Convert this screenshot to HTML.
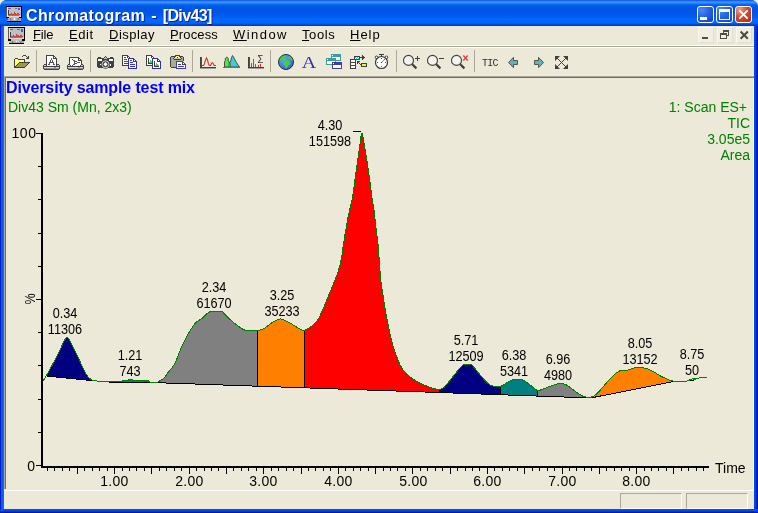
<!DOCTYPE html>
<html><head><meta charset="utf-8"><title>Chromatogram - [Div43]</title>
<style>
html,body{margin:0;padding:0;}
body{width:758px;height:513px;overflow:hidden;position:relative;background:#ECE9D8;font-family:"Liberation Sans",sans-serif;font-size:13px;color:#000;}
.abs{position:absolute;}
#win{will-change:transform;position:absolute;left:0;top:0;width:758px;height:513px;background:#0054E3;border-radius:7px 7px 0 0;overflow:hidden;}
#title{position:absolute;left:0;top:0;width:758px;height:26px;background:linear-gradient(to bottom,#0044D6 0px,#2A7DF0 1px,#3C96FF 2.2px,#2A86FF 3.2px,#0A6CF8 4.2px,#0260EC 5.2px,#0058E6 6.5px,#0054E3 10px,#0056EB 14px,#005DF5 17px,#0268FE 19.5px,#0066FA 22.5px,#005AEA 23.8px,#0042CE 24.8px,#0036BC 26px);}
#ttext{position:absolute;left:26px;top:7px;font-weight:bold;font-size:16px;color:#fff;white-space:nowrap;text-shadow:1px 1px 0 rgba(10,24,131,0.85);letter-spacing:0.12px;}
#client{position:absolute;left:4px;top:26px;width:750px;height:483px;background:#ECE9D8;}
#menuline{position:absolute;left:4px;top:45px;width:750px;height:3px;background:#fff;}
.mi{position:absolute;top:26px;height:18px;line-height:17px;font-size:13px;white-space:nowrap;letter-spacing:0.6px;}
.mi u{text-decoration:underline;}
#mdi-l{position:absolute;left:4px;top:76px;width:1px;height:413px;background:#ACA899;}
#mdi-t{position:absolute;left:4px;top:76px;width:750px;height:1px;background:#ACA899;}
#mdi-t2{position:absolute;left:5px;top:77px;width:749px;height:1px;background:#716F64;}
#mdi-l2{position:absolute;left:5px;top:77px;width:1px;height:412px;background:#716F64;}
#sb-top{position:absolute;left:4px;top:490px;width:750px;height:1px;background:#fff;}
.sbp{position:absolute;top:493px;height:16px;border-top:1px solid #ACA899;border-left:1px solid #ACA899;border-right:1px solid #fff;border-bottom:1px solid #fff;box-sizing:border-box;}
.tb{position:absolute;top:6px;width:15px;height:15px;border:1px solid #fff;border-radius:3px;background:radial-gradient(circle at 25% 20%,#4a8af5 0%,#2563e8 45%,#0a3fcf 100%);}
.tbc{background:radial-gradient(circle at 25% 20%,#f0a088 0%,#d8492a 45%,#b8280f 100%);}
.mb{position:absolute;top:27px;width:16px;height:16px;background:#F1EFE4;box-shadow:inset 1px 1px 0 #F8F7F0, inset -1px -1px 0 #E2DFD0;}
.sep{position:absolute;top:50px;width:1px;height:22px;background:#ACA899;}
#h1{position:absolute;left:6px;top:79px;font-weight:bold;font-size:16px;color:#0000FF;white-space:nowrap;letter-spacing:-0.13px;line-height:18px;}
#h2{position:absolute;left:8px;top:99px;font-size:14px;color:#008000;white-space:nowrap;line-height:16px;}
#tr{position:absolute;right:8px;top:99px;font-size:14px;color:#008000;white-space:nowrap;text-align:right;line-height:16px;}
.pk{position:absolute;width:80px;text-align:center;font-size:14px;line-height:16px;white-space:nowrap;transform:scaleX(0.905);transform-origin:50% 50%;}
.xl{position:absolute;top:474px;width:60px;text-align:center;font-size:14px;line-height:14px;letter-spacing:0.3px;text-indent:0.8px;}
.yl{position:absolute;font-size:14px;line-height:14px;text-align:right;width:30px;}
</style></head><body>
<div id="win">
<div id="title"></div>
<div id="ttext"><span style="letter-spacing:0.36px">Chromatogram</span><span style="word-spacing:1.6px"> - </span><span style="letter-spacing:-0.65px">[Div43]</span></div>
<div id="client"></div>
<div class="abs" style="left:0;top:26px;width:4px;height:487px;background:linear-gradient(to right,#0019CF 0,#0019CF 1px,#0A5FE8 1px,#0A5FE8 3px,#1563F0 3px)"></div>
<div class="abs" style="left:754px;top:26px;width:4px;height:487px;background:linear-gradient(to right,#0046E4 0,#0046E4 2px,#0028C0 2px,#0028C0 3px,#001590 3px)"></div>
<div class="abs" style="left:0;top:509px;width:758px;height:4px;background:linear-gradient(to bottom,#0050E8 0,#0050E8 2px,#0032C4 2px,#0032C4 3px,#00179A 3px)"></div>
<div class="abs" style="left:753px;top:76px;width:1px;height:414px;background:#fff"></div>
<div id="menuline"></div><div class="abs" style="left:4px;top:46px;width:750px;height:1px;background:#ACA899"></div>
<div class="mi" style="left:33px;letter-spacing:-0.15px"><u>F</u>ile</div>
<div class="mi" style="left:69px"><u>E</u>dit</div>
<div class="mi" style="left:109px;letter-spacing:0.48px"><u>D</u>isplay</div>
<div class="mi" style="left:170px;letter-spacing:0.15px"><u>P</u>rocess</div>
<div class="mi" style="left:233px;letter-spacing:1.44px"><u>W</u>indow</div>
<div class="mi" style="left:302px"><u>T</u>ools</div>
<div class="mi" style="left:350px;letter-spacing:1px"><u>H</u>elp</div>
<div class="sep" style="left:36px"></div>
<div class="sep" style="left:90px"></div>
<div class="sep" style="left:192px"></div>
<div class="sep" style="left:270px"></div>
<div class="sep" style="left:396px"></div>
<div class="sep" style="left:474px"></div>
<svg id="icons" width="758" height="513" viewBox="0 0 758 513" style="position:absolute;left:0;top:0" shape-rendering="crispEdges">
<g transform="translate(6,6) scale(1,1.04)"><rect x="0" y="0" width="16" height="1" fill="#000"/><rect x="0" y="1" width="1" height="1" fill="#585858"/><rect x="1" y="1" width="1" height="1" fill="#E8E8E8"/><rect x="2" y="1" width="13" height="1" fill="#C0C0C0"/><rect x="15" y="1" width="1" height="1" fill="#000"/><rect x="0" y="2" width="1" height="1" fill="#585858"/><rect x="1" y="2" width="1" height="1" fill="#E8E8E8"/><rect x="2" y="2" width="3" height="1" fill="#6060D0"/><rect x="5" y="2" width="4" height="1" fill="#C0C0C0"/><rect x="9" y="2" width="2" height="1" fill="#6060D0"/><rect x="11" y="2" width="1" height="1" fill="#C0C0C0"/><rect x="12" y="2" width="2" height="1" fill="#5050F0"/><rect x="14" y="2" width="1" height="1" fill="#C0C0C0"/><rect x="15" y="2" width="1" height="1" fill="#000"/><rect x="0" y="3" width="1" height="1" fill="#585858"/><rect x="1" y="3" width="1" height="1" fill="#E8E8E8"/><rect x="2" y="3" width="10" height="1" fill="#C0C0C0"/><rect x="12" y="3" width="2" height="1" fill="#5050F0"/><rect x="14" y="3" width="1" height="1" fill="#C0C0C0"/><rect x="15" y="3" width="1" height="1" fill="#000"/><rect x="0" y="4" width="1" height="1" fill="#585858"/><rect x="1" y="4" width="1" height="1" fill="#E8E8E8"/><rect x="2" y="4" width="1" height="1" fill="#404040"/><rect x="3" y="4" width="12" height="1" fill="#C0C0C0"/><rect x="15" y="4" width="1" height="1" fill="#000"/><rect x="0" y="5" width="1" height="1" fill="#585858"/><rect x="1" y="5" width="1" height="1" fill="#E8E8E8"/><rect x="2" y="5" width="1" height="1" fill="#404040"/><rect x="3" y="5" width="5" height="1" fill="#C0C0C0"/><rect x="8" y="5" width="1" height="1" fill="#CDA8A8"/><rect x="9" y="5" width="6" height="1" fill="#C0C0C0"/><rect x="15" y="5" width="1" height="1" fill="#000"/><rect x="0" y="6" width="1" height="1" fill="#585858"/><rect x="1" y="6" width="1" height="1" fill="#E8E8E8"/><rect x="2" y="6" width="1" height="1" fill="#404040"/><rect x="3" y="6" width="2" height="1" fill="#C0C0C0"/><rect x="5" y="6" width="1" height="1" fill="#CDA8A8"/><rect x="6" y="6" width="2" height="1" fill="#C0C0C0"/><rect x="8" y="6" width="1" height="1" fill="#C04848"/><rect x="9" y="6" width="1" height="1" fill="#C0C0C0"/><rect x="10" y="6" width="1" height="1" fill="#CDA8A8"/><rect x="11" y="6" width="1" height="1" fill="#C0C0C0"/><rect x="12" y="6" width="1" height="1" fill="#CDA8A8"/><rect x="13" y="6" width="2" height="1" fill="#C0C0C0"/><rect x="15" y="6" width="1" height="1" fill="#000"/><rect x="0" y="7" width="1" height="1" fill="#585858"/><rect x="1" y="7" width="1" height="1" fill="#E8E8E8"/><rect x="2" y="7" width="1" height="1" fill="#404040"/><rect x="3" y="7" width="1" height="1" fill="#C0C0C0"/><rect x="4" y="7" width="1" height="1" fill="#CDA8A8"/><rect x="5" y="7" width="1" height="1" fill="#C04848"/><rect x="6" y="7" width="1" height="1" fill="#C0C0C0"/><rect x="7" y="7" width="1" height="1" fill="#CDA8A8"/><rect x="8" y="7" width="2" height="1" fill="#C04848"/><rect x="10" y="7" width="1" height="1" fill="#C0C0C0"/><rect x="11" y="7" width="2" height="1" fill="#C04848"/><rect x="13" y="7" width="1" height="1" fill="#C0C0C0"/><rect x="14" y="7" width="1" height="1" fill="#CDA8A8"/><rect x="15" y="7" width="1" height="1" fill="#000"/><rect x="0" y="8" width="1" height="1" fill="#585858"/><rect x="1" y="8" width="1" height="1" fill="#E8E8E8"/><rect x="2" y="8" width="1" height="1" fill="#404040"/><rect x="3" y="8" width="11" height="1" fill="#C04848"/><rect x="14" y="8" width="1" height="1" fill="#C0C0C0"/><rect x="15" y="8" width="1" height="1" fill="#000"/><rect x="0" y="9" width="1" height="1" fill="#585858"/><rect x="1" y="9" width="1" height="1" fill="#E8E8E8"/><rect x="2" y="9" width="11" height="1" fill="#808080"/><rect x="13" y="9" width="2" height="1" fill="#C0C0C0"/><rect x="15" y="9" width="1" height="1" fill="#000"/><rect x="0" y="10" width="1" height="1" fill="#585858"/><rect x="1" y="10" width="14" height="1" fill="#D8D8D8"/><rect x="15" y="10" width="1" height="1" fill="#000"/><rect x="0" y="11" width="3" height="1" fill="#000"/><rect x="3" y="11" width="10" height="1" fill="#C0C0C0"/><rect x="13" y="11" width="3" height="1" fill="#000"/><rect x="2" y="12" width="2" height="1" fill="#A8A8A8"/><rect x="4" y="12" width="1" height="1" fill="#808080"/><rect x="5" y="12" width="2" height="1" fill="#A8A8A8"/><rect x="7" y="12" width="1" height="1" fill="#C0C0C0"/><rect x="8" y="12" width="1" height="1" fill="#fff"/><rect x="9" y="12" width="1" height="1" fill="#C0C0C0"/><rect x="10" y="12" width="2" height="1" fill="#A8A8A8"/><rect x="12" y="12" width="1" height="1" fill="#808080"/><rect x="13" y="12" width="2" height="1" fill="#A8A8A8"/><rect x="1" y="13" width="3" height="1" fill="#A8A8A8"/><rect x="4" y="13" width="1" height="1" fill="#808080"/><rect x="5" y="13" width="6" height="1" fill="#A8A8A8"/><rect x="11" y="13" width="1" height="1" fill="#808080"/><rect x="12" y="13" width="3" height="1" fill="#A8A8A8"/><rect x="1" y="14" width="14" height="1" fill="#000"/></g>
<g transform="translate(8,27) scale(1.05,1.13)"><rect x="0" y="0" width="16" height="1" fill="#000"/><rect x="0" y="1" width="1" height="1" fill="#585858"/><rect x="1" y="1" width="1" height="1" fill="#E8E8E8"/><rect x="2" y="1" width="13" height="1" fill="#C0C0C0"/><rect x="15" y="1" width="1" height="1" fill="#000"/><rect x="0" y="2" width="1" height="1" fill="#585858"/><rect x="1" y="2" width="1" height="1" fill="#E8E8E8"/><rect x="2" y="2" width="3" height="1" fill="#6060D0"/><rect x="5" y="2" width="4" height="1" fill="#C0C0C0"/><rect x="9" y="2" width="2" height="1" fill="#6060D0"/><rect x="11" y="2" width="1" height="1" fill="#C0C0C0"/><rect x="12" y="2" width="2" height="1" fill="#5050F0"/><rect x="14" y="2" width="1" height="1" fill="#C0C0C0"/><rect x="15" y="2" width="1" height="1" fill="#000"/><rect x="0" y="3" width="1" height="1" fill="#585858"/><rect x="1" y="3" width="1" height="1" fill="#E8E8E8"/><rect x="2" y="3" width="10" height="1" fill="#C0C0C0"/><rect x="12" y="3" width="2" height="1" fill="#5050F0"/><rect x="14" y="3" width="1" height="1" fill="#C0C0C0"/><rect x="15" y="3" width="1" height="1" fill="#000"/><rect x="0" y="4" width="1" height="1" fill="#585858"/><rect x="1" y="4" width="1" height="1" fill="#E8E8E8"/><rect x="2" y="4" width="1" height="1" fill="#404040"/><rect x="3" y="4" width="12" height="1" fill="#C0C0C0"/><rect x="15" y="4" width="1" height="1" fill="#000"/><rect x="0" y="5" width="1" height="1" fill="#585858"/><rect x="1" y="5" width="1" height="1" fill="#E8E8E8"/><rect x="2" y="5" width="1" height="1" fill="#404040"/><rect x="3" y="5" width="5" height="1" fill="#C0C0C0"/><rect x="8" y="5" width="1" height="1" fill="#CDA8A8"/><rect x="9" y="5" width="6" height="1" fill="#C0C0C0"/><rect x="15" y="5" width="1" height="1" fill="#000"/><rect x="0" y="6" width="1" height="1" fill="#585858"/><rect x="1" y="6" width="1" height="1" fill="#E8E8E8"/><rect x="2" y="6" width="1" height="1" fill="#404040"/><rect x="3" y="6" width="2" height="1" fill="#C0C0C0"/><rect x="5" y="6" width="1" height="1" fill="#CDA8A8"/><rect x="6" y="6" width="2" height="1" fill="#C0C0C0"/><rect x="8" y="6" width="1" height="1" fill="#C04848"/><rect x="9" y="6" width="1" height="1" fill="#C0C0C0"/><rect x="10" y="6" width="1" height="1" fill="#CDA8A8"/><rect x="11" y="6" width="1" height="1" fill="#C0C0C0"/><rect x="12" y="6" width="1" height="1" fill="#CDA8A8"/><rect x="13" y="6" width="2" height="1" fill="#C0C0C0"/><rect x="15" y="6" width="1" height="1" fill="#000"/><rect x="0" y="7" width="1" height="1" fill="#585858"/><rect x="1" y="7" width="1" height="1" fill="#E8E8E8"/><rect x="2" y="7" width="1" height="1" fill="#404040"/><rect x="3" y="7" width="1" height="1" fill="#C0C0C0"/><rect x="4" y="7" width="1" height="1" fill="#CDA8A8"/><rect x="5" y="7" width="1" height="1" fill="#C04848"/><rect x="6" y="7" width="1" height="1" fill="#C0C0C0"/><rect x="7" y="7" width="1" height="1" fill="#CDA8A8"/><rect x="8" y="7" width="2" height="1" fill="#C04848"/><rect x="10" y="7" width="1" height="1" fill="#C0C0C0"/><rect x="11" y="7" width="2" height="1" fill="#C04848"/><rect x="13" y="7" width="1" height="1" fill="#C0C0C0"/><rect x="14" y="7" width="1" height="1" fill="#CDA8A8"/><rect x="15" y="7" width="1" height="1" fill="#000"/><rect x="0" y="8" width="1" height="1" fill="#585858"/><rect x="1" y="8" width="1" height="1" fill="#E8E8E8"/><rect x="2" y="8" width="1" height="1" fill="#404040"/><rect x="3" y="8" width="11" height="1" fill="#C04848"/><rect x="14" y="8" width="1" height="1" fill="#C0C0C0"/><rect x="15" y="8" width="1" height="1" fill="#000"/><rect x="0" y="9" width="1" height="1" fill="#585858"/><rect x="1" y="9" width="1" height="1" fill="#E8E8E8"/><rect x="2" y="9" width="11" height="1" fill="#808080"/><rect x="13" y="9" width="2" height="1" fill="#C0C0C0"/><rect x="15" y="9" width="1" height="1" fill="#000"/><rect x="0" y="10" width="1" height="1" fill="#585858"/><rect x="1" y="10" width="14" height="1" fill="#D8D8D8"/><rect x="15" y="10" width="1" height="1" fill="#000"/><rect x="0" y="11" width="3" height="1" fill="#000"/><rect x="3" y="11" width="10" height="1" fill="#C0C0C0"/><rect x="13" y="11" width="3" height="1" fill="#000"/><rect x="2" y="12" width="2" height="1" fill="#A8A8A8"/><rect x="4" y="12" width="1" height="1" fill="#808080"/><rect x="5" y="12" width="2" height="1" fill="#A8A8A8"/><rect x="7" y="12" width="1" height="1" fill="#C0C0C0"/><rect x="8" y="12" width="1" height="1" fill="#fff"/><rect x="9" y="12" width="1" height="1" fill="#C0C0C0"/><rect x="10" y="12" width="2" height="1" fill="#A8A8A8"/><rect x="12" y="12" width="1" height="1" fill="#808080"/><rect x="13" y="12" width="2" height="1" fill="#A8A8A8"/><rect x="1" y="13" width="3" height="1" fill="#A8A8A8"/><rect x="4" y="13" width="1" height="1" fill="#808080"/><rect x="5" y="13" width="6" height="1" fill="#A8A8A8"/><rect x="11" y="13" width="1" height="1" fill="#808080"/><rect x="12" y="13" width="3" height="1" fill="#A8A8A8"/><rect x="1" y="14" width="14" height="1" fill="#000"/></g>
<rect x="23" y="55" width="3" height="1" fill="#404040"/><rect x="22" y="56" width="1" height="1" fill="#404040"/><rect x="26" y="56" width="1" height="1" fill="#404040"/><rect x="28" y="56" width="1" height="1" fill="#404040"/><rect x="27" y="57" width="2" height="1" fill="#404040"/><rect x="15" y="58" width="3" height="1" fill="#404040"/><rect x="26" y="58" width="3" height="1" fill="#404040"/><rect x="14" y="59" width="1" height="1" fill="#404040"/><rect x="15" y="59" width="1" height="1" fill="#FFFF66"/><rect x="16" y="59" width="1" height="1" fill="#fff"/><rect x="17" y="59" width="1" height="1" fill="#FFFF66"/><rect x="18" y="59" width="7" height="1" fill="#404040"/><rect x="14" y="60" width="1" height="1" fill="#404040"/><rect x="15" y="60" width="1" height="1" fill="#fff"/><rect x="16" y="60" width="1" height="1" fill="#FFFF66"/><rect x="17" y="60" width="1" height="1" fill="#fff"/><rect x="18" y="60" width="1" height="1" fill="#FFFF66"/><rect x="19" y="60" width="1" height="1" fill="#fff"/><rect x="20" y="60" width="1" height="1" fill="#FFFF66"/><rect x="21" y="60" width="1" height="1" fill="#fff"/><rect x="22" y="60" width="1" height="1" fill="#FFFF66"/><rect x="23" y="60" width="1" height="1" fill="#fff"/><rect x="24" y="60" width="1" height="1" fill="#404040"/><rect x="14" y="61" width="1" height="1" fill="#404040"/><rect x="15" y="61" width="1" height="1" fill="#FFFF66"/><rect x="16" y="61" width="1" height="1" fill="#fff"/><rect x="17" y="61" width="1" height="1" fill="#FFFF66"/><rect x="18" y="61" width="1" height="1" fill="#fff"/><rect x="19" y="61" width="1" height="1" fill="#FFFF66"/><rect x="20" y="61" width="1" height="1" fill="#fff"/><rect x="21" y="61" width="1" height="1" fill="#FFFF66"/><rect x="22" y="61" width="1" height="1" fill="#fff"/><rect x="23" y="61" width="1" height="1" fill="#FFFF66"/><rect x="24" y="61" width="1" height="1" fill="#404040"/><rect x="14" y="62" width="1" height="1" fill="#404040"/><rect x="15" y="62" width="1" height="1" fill="#fff"/><rect x="16" y="62" width="1" height="1" fill="#FFFF66"/><rect x="17" y="62" width="1" height="1" fill="#fff"/><rect x="18" y="62" width="1" height="1" fill="#FFFF66"/><rect x="19" y="62" width="11" height="1" fill="#404040"/><rect x="14" y="63" width="1" height="1" fill="#404040"/><rect x="15" y="63" width="1" height="1" fill="#FFFF66"/><rect x="16" y="63" width="1" height="1" fill="#fff"/><rect x="17" y="63" width="1" height="1" fill="#FFFF66"/><rect x="18" y="63" width="1" height="1" fill="#404040"/><rect x="19" y="63" width="9" height="1" fill="#999955"/><rect x="28" y="63" width="1" height="1" fill="#404040"/><rect x="14" y="64" width="1" height="1" fill="#404040"/><rect x="15" y="64" width="1" height="1" fill="#fff"/><rect x="16" y="64" width="1" height="1" fill="#FFFF66"/><rect x="17" y="64" width="1" height="1" fill="#404040"/><rect x="18" y="64" width="9" height="1" fill="#999955"/><rect x="27" y="64" width="1" height="1" fill="#404040"/><rect x="14" y="65" width="1" height="1" fill="#404040"/><rect x="15" y="65" width="1" height="1" fill="#FFFF66"/><rect x="16" y="65" width="1" height="1" fill="#404040"/><rect x="17" y="65" width="9" height="1" fill="#999955"/><rect x="26" y="65" width="1" height="1" fill="#404040"/><rect x="14" y="66" width="2" height="1" fill="#404040"/><rect x="16" y="66" width="9" height="1" fill="#999955"/><rect x="25" y="66" width="1" height="1" fill="#404040"/><rect x="14" y="67" width="11" height="1" fill="#404040"/>
<rect x="46" y="55" width="8" height="1" fill="#404040"/><rect x="46" y="56" width="1" height="1" fill="#404040"/><rect x="47" y="56" width="6" height="1" fill="#fff"/><rect x="53" y="56" width="2" height="1" fill="#404040"/><rect x="46" y="57" width="1" height="1" fill="#404040"/><rect x="47" y="57" width="6" height="1" fill="#fff"/><rect x="53" y="57" width="1" height="1" fill="#404040"/><rect x="54" y="57" width="1" height="1" fill="#fff"/><rect x="55" y="57" width="1" height="1" fill="#404040"/><rect x="46" y="58" width="1" height="1" fill="#404040"/><rect x="47" y="58" width="4" height="1" fill="#fff"/><rect x="51" y="58" width="1" height="1" fill="#585858"/><rect x="52" y="58" width="1" height="1" fill="#fff"/><rect x="53" y="58" width="4" height="1" fill="#404040"/><rect x="46" y="59" width="1" height="1" fill="#404040"/><rect x="47" y="59" width="4" height="1" fill="#fff"/><rect x="51" y="59" width="1" height="1" fill="#585858"/><rect x="52" y="59" width="4" height="1" fill="#fff"/><rect x="56" y="59" width="1" height="1" fill="#404040"/><rect x="46" y="60" width="1" height="1" fill="#404040"/><rect x="47" y="60" width="3" height="1" fill="#fff"/><rect x="50" y="60" width="1" height="1" fill="#585858"/><rect x="51" y="60" width="1" height="1" fill="#fff"/><rect x="52" y="60" width="1" height="1" fill="#585858"/><rect x="53" y="60" width="3" height="1" fill="#fff"/><rect x="56" y="60" width="1" height="1" fill="#404040"/><rect x="46" y="61" width="1" height="1" fill="#404040"/><rect x="47" y="61" width="3" height="1" fill="#fff"/><rect x="50" y="61" width="1" height="1" fill="#585858"/><rect x="51" y="61" width="1" height="1" fill="#fff"/><rect x="52" y="61" width="1" height="1" fill="#585858"/><rect x="53" y="61" width="3" height="1" fill="#fff"/><rect x="56" y="61" width="1" height="1" fill="#404040"/><rect x="46" y="62" width="1" height="1" fill="#404040"/><rect x="47" y="62" width="2" height="1" fill="#fff"/><rect x="49" y="62" width="5" height="1" fill="#585858"/><rect x="54" y="62" width="2" height="1" fill="#fff"/><rect x="56" y="62" width="1" height="1" fill="#404040"/><rect x="46" y="63" width="1" height="1" fill="#404040"/><rect x="47" y="63" width="2" height="1" fill="#fff"/><rect x="49" y="63" width="1" height="1" fill="#585858"/><rect x="50" y="63" width="3" height="1" fill="#fff"/><rect x="53" y="63" width="1" height="1" fill="#585858"/><rect x="54" y="63" width="2" height="1" fill="#fff"/><rect x="56" y="63" width="1" height="1" fill="#404040"/><rect x="44" y="64" width="3" height="1" fill="#404040"/><rect x="47" y="64" width="1" height="1" fill="#fff"/><rect x="48" y="64" width="2" height="1" fill="#585858"/><rect x="50" y="64" width="3" height="1" fill="#fff"/><rect x="53" y="64" width="2" height="1" fill="#585858"/><rect x="55" y="64" width="1" height="1" fill="#fff"/><rect x="56" y="64" width="3" height="1" fill="#404040"/><rect x="43" y="65" width="1" height="1" fill="#404040"/><rect x="44" y="65" width="2" height="1" fill="#D8D8D8"/><rect x="46" y="65" width="1" height="1" fill="#404040"/><rect x="47" y="65" width="9" height="1" fill="#fff"/><rect x="56" y="65" width="1" height="1" fill="#404040"/><rect x="57" y="65" width="2" height="1" fill="#D8D8D8"/><rect x="59" y="65" width="1" height="1" fill="#404040"/><rect x="43" y="66" width="17" height="1" fill="#404040"/><rect x="43" y="67" width="1" height="1" fill="#404040"/><rect x="44" y="67" width="10" height="1" fill="#D8D8D8"/><rect x="54" y="67" width="2" height="1" fill="#33DD33"/><rect x="56" y="67" width="3" height="1" fill="#D8D8D8"/><rect x="59" y="67" width="1" height="1" fill="#404040"/><rect x="43" y="68" width="1" height="1" fill="#404040"/><rect x="44" y="68" width="15" height="1" fill="#8C8C8C"/><rect x="59" y="68" width="1" height="1" fill="#404040"/><rect x="44" y="69" width="15" height="1" fill="#404040"/>
<rect x="69" y="57" width="10" height="1" fill="#404040"/><rect x="69" y="58" width="1" height="1" fill="#404040"/><rect x="70" y="58" width="8" height="1" fill="#fff"/><rect x="78" y="58" width="2" height="1" fill="#404040"/><rect x="69" y="59" width="1" height="1" fill="#404040"/><rect x="70" y="59" width="2" height="1" fill="#fff"/><rect x="72" y="59" width="1" height="1" fill="#585858"/><rect x="73" y="59" width="5" height="1" fill="#fff"/><rect x="78" y="59" width="1" height="1" fill="#404040"/><rect x="79" y="59" width="1" height="1" fill="#fff"/><rect x="80" y="59" width="1" height="1" fill="#404040"/><rect x="69" y="60" width="1" height="1" fill="#404040"/><rect x="70" y="60" width="3" height="1" fill="#fff"/><rect x="73" y="60" width="2" height="1" fill="#585858"/><rect x="75" y="60" width="3" height="1" fill="#fff"/><rect x="78" y="60" width="4" height="1" fill="#404040"/><rect x="69" y="61" width="1" height="1" fill="#404040"/><rect x="70" y="61" width="4" height="1" fill="#fff"/><rect x="74" y="61" width="3" height="1" fill="#585858"/><rect x="77" y="61" width="4" height="1" fill="#fff"/><rect x="81" y="61" width="1" height="1" fill="#404040"/><rect x="69" y="62" width="1" height="1" fill="#404040"/><rect x="70" y="62" width="4" height="1" fill="#fff"/><rect x="74" y="62" width="1" height="1" fill="#585858"/><rect x="75" y="62" width="2" height="1" fill="#fff"/><rect x="77" y="62" width="3" height="1" fill="#585858"/><rect x="80" y="62" width="1" height="1" fill="#fff"/><rect x="81" y="62" width="1" height="1" fill="#404040"/><rect x="69" y="63" width="1" height="1" fill="#404040"/><rect x="70" y="63" width="4" height="1" fill="#fff"/><rect x="74" y="63" width="3" height="1" fill="#585858"/><rect x="77" y="63" width="4" height="1" fill="#fff"/><rect x="81" y="63" width="1" height="1" fill="#404040"/><rect x="68" y="64" width="2" height="1" fill="#404040"/><rect x="70" y="64" width="3" height="1" fill="#fff"/><rect x="73" y="64" width="2" height="1" fill="#585858"/><rect x="75" y="64" width="6" height="1" fill="#fff"/><rect x="81" y="64" width="2" height="1" fill="#404040"/><rect x="67" y="65" width="1" height="1" fill="#404040"/><rect x="68" y="65" width="2" height="1" fill="#D8D8D8"/><rect x="70" y="65" width="1" height="1" fill="#404040"/><rect x="71" y="65" width="1" height="1" fill="#fff"/><rect x="72" y="65" width="1" height="1" fill="#585858"/><rect x="73" y="65" width="7" height="1" fill="#fff"/><rect x="80" y="65" width="1" height="1" fill="#404040"/><rect x="81" y="65" width="2" height="1" fill="#D8D8D8"/><rect x="83" y="65" width="1" height="1" fill="#404040"/><rect x="67" y="66" width="17" height="1" fill="#404040"/><rect x="67" y="67" width="1" height="1" fill="#404040"/><rect x="68" y="67" width="10" height="1" fill="#D8D8D8"/><rect x="78" y="67" width="2" height="1" fill="#33DD33"/><rect x="80" y="67" width="3" height="1" fill="#D8D8D8"/><rect x="83" y="67" width="1" height="1" fill="#404040"/><rect x="67" y="68" width="1" height="1" fill="#404040"/><rect x="68" y="68" width="15" height="1" fill="#8C8C8C"/><rect x="83" y="68" width="1" height="1" fill="#404040"/><rect x="68" y="69" width="15" height="1" fill="#404040"/>
<rect x="105" y="56" width="1" height="1" fill="#404040"/><rect x="98" y="57" width="3" height="1" fill="#404040"/><rect x="104" y="57" width="1" height="1" fill="#404040"/><rect x="105" y="57" width="1" height="1" fill="#C0C0C0"/><rect x="106" y="57" width="1" height="1" fill="#404040"/><rect x="110" y="57" width="3" height="1" fill="#404040"/><rect x="97" y="58" width="7" height="1" fill="#404040"/><rect x="104" y="58" width="3" height="1" fill="#C0C0C0"/><rect x="107" y="58" width="7" height="1" fill="#404040"/><rect x="97" y="59" width="1" height="1" fill="#404040"/><rect x="98" y="59" width="4" height="1" fill="#fff"/><rect x="102" y="59" width="7" height="1" fill="#404040"/><rect x="109" y="59" width="4" height="1" fill="#fff"/><rect x="113" y="59" width="1" height="1" fill="#404040"/><rect x="97" y="60" width="1" height="1" fill="#404040"/><rect x="98" y="60" width="4" height="1" fill="#fff"/><rect x="102" y="60" width="7" height="1" fill="#404040"/><rect x="109" y="60" width="4" height="1" fill="#fff"/><rect x="113" y="60" width="1" height="1" fill="#404040"/><rect x="97" y="61" width="17" height="1" fill="#404040"/><rect x="97" y="62" width="17" height="1" fill="#404040"/><rect x="97" y="63" width="17" height="1" fill="#404040"/><rect x="97" y="64" width="3" height="1" fill="#404040"/><rect x="100" y="64" width="1" height="1" fill="#fff"/><rect x="101" y="64" width="9" height="1" fill="#404040"/><rect x="110" y="64" width="1" height="1" fill="#fff"/><rect x="111" y="64" width="3" height="1" fill="#404040"/><rect x="97" y="65" width="13" height="1" fill="#404040"/><rect x="110" y="65" width="1" height="1" fill="#fff"/><rect x="111" y="65" width="3" height="1" fill="#404040"/><rect x="97" y="66" width="17" height="1" fill="#404040"/><rect x="98" y="67" width="15" height="1" fill="#404040"/>
<g shape-rendering="auto"><circle cx="105.5" cy="64.3" r="4.4" fill="#404040"/><circle cx="105.5" cy="64.3" r="3.5" fill="none" stroke="#D0D0D0" stroke-width="1"/><path d="M105.5 62 L107.6 64.3 L105.5 66.6 L103.4 64.3Z" fill="#fff"/></g>
<rect x="122" y="55" width="6" height="1" fill="#404040"/><rect x="122" y="56" width="1" height="1" fill="#404040"/><rect x="123" y="56" width="4" height="1" fill="#fff"/><rect x="127" y="56" width="2" height="1" fill="#404040"/><rect x="122" y="57" width="1" height="1" fill="#404040"/><rect x="123" y="57" width="1" height="1" fill="#fff"/><rect x="124" y="57" width="2" height="1" fill="#3333FF"/><rect x="126" y="57" width="1" height="1" fill="#fff"/><rect x="127" y="57" width="1" height="1" fill="#404040"/><rect x="128" y="57" width="1" height="1" fill="#fff"/><rect x="129" y="57" width="1" height="1" fill="#404040"/><rect x="122" y="58" width="1" height="1" fill="#404040"/><rect x="123" y="58" width="5" height="1" fill="#fff"/><rect x="128" y="58" width="6" height="1" fill="#3333A0"/><rect x="122" y="59" width="1" height="1" fill="#404040"/><rect x="123" y="59" width="1" height="1" fill="#fff"/><rect x="124" y="59" width="3" height="1" fill="#3333FF"/><rect x="127" y="59" width="1" height="1" fill="#fff"/><rect x="128" y="59" width="1" height="1" fill="#3333A0"/><rect x="129" y="59" width="4" height="1" fill="#fff"/><rect x="133" y="59" width="2" height="1" fill="#3333A0"/><rect x="122" y="60" width="1" height="1" fill="#404040"/><rect x="123" y="60" width="5" height="1" fill="#fff"/><rect x="128" y="60" width="1" height="1" fill="#3333A0"/><rect x="129" y="60" width="1" height="1" fill="#fff"/><rect x="130" y="60" width="2" height="1" fill="#3333FF"/><rect x="132" y="60" width="1" height="1" fill="#fff"/><rect x="133" y="60" width="1" height="1" fill="#3333A0"/><rect x="134" y="60" width="1" height="1" fill="#fff"/><rect x="135" y="60" width="1" height="1" fill="#3333A0"/><rect x="122" y="61" width="1" height="1" fill="#404040"/><rect x="123" y="61" width="1" height="1" fill="#fff"/><rect x="124" y="61" width="4" height="1" fill="#3333FF"/><rect x="128" y="61" width="1" height="1" fill="#3333A0"/><rect x="129" y="61" width="4" height="1" fill="#fff"/><rect x="133" y="61" width="4" height="1" fill="#3333A0"/><rect x="122" y="62" width="1" height="1" fill="#404040"/><rect x="123" y="62" width="5" height="1" fill="#fff"/><rect x="128" y="62" width="1" height="1" fill="#3333A0"/><rect x="129" y="62" width="1" height="1" fill="#fff"/><rect x="130" y="62" width="3" height="1" fill="#3333FF"/><rect x="133" y="62" width="3" height="1" fill="#fff"/><rect x="136" y="62" width="1" height="1" fill="#3333A0"/><rect x="122" y="63" width="1" height="1" fill="#404040"/><rect x="123" y="63" width="1" height="1" fill="#fff"/><rect x="124" y="63" width="4" height="1" fill="#3333FF"/><rect x="128" y="63" width="1" height="1" fill="#3333A0"/><rect x="129" y="63" width="7" height="1" fill="#fff"/><rect x="136" y="63" width="1" height="1" fill="#3333A0"/><rect x="122" y="64" width="1" height="1" fill="#404040"/><rect x="123" y="64" width="5" height="1" fill="#fff"/><rect x="128" y="64" width="1" height="1" fill="#3333A0"/><rect x="129" y="64" width="1" height="1" fill="#fff"/><rect x="130" y="64" width="5" height="1" fill="#3333FF"/><rect x="135" y="64" width="1" height="1" fill="#fff"/><rect x="136" y="64" width="1" height="1" fill="#3333A0"/><rect x="122" y="65" width="6" height="1" fill="#404040"/><rect x="128" y="65" width="1" height="1" fill="#3333A0"/><rect x="129" y="65" width="7" height="1" fill="#fff"/><rect x="136" y="65" width="1" height="1" fill="#3333A0"/><rect x="128" y="66" width="1" height="1" fill="#3333A0"/><rect x="129" y="66" width="1" height="1" fill="#fff"/><rect x="130" y="66" width="5" height="1" fill="#3333FF"/><rect x="135" y="66" width="1" height="1" fill="#fff"/><rect x="136" y="66" width="1" height="1" fill="#3333A0"/><rect x="128" y="67" width="1" height="1" fill="#3333A0"/><rect x="129" y="67" width="7" height="1" fill="#fff"/><rect x="136" y="67" width="1" height="1" fill="#3333A0"/><rect x="128" y="68" width="9" height="1" fill="#3333A0"/>
<rect x="146" y="55" width="6" height="1" fill="#404040"/><rect x="146" y="56" width="1" height="1" fill="#404040"/><rect x="147" y="56" width="4" height="1" fill="#fff"/><rect x="151" y="56" width="2" height="1" fill="#404040"/><rect x="146" y="57" width="1" height="1" fill="#404040"/><rect x="147" y="57" width="4" height="1" fill="#fff"/><rect x="151" y="57" width="1" height="1" fill="#404040"/><rect x="152" y="57" width="1" height="1" fill="#fff"/><rect x="153" y="57" width="1" height="1" fill="#404040"/><rect x="146" y="58" width="1" height="1" fill="#404040"/><rect x="147" y="58" width="1" height="1" fill="#fff"/><rect x="148" y="58" width="1" height="1" fill="#404040"/><rect x="149" y="58" width="3" height="1" fill="#fff"/><rect x="152" y="58" width="6" height="1" fill="#3333A0"/><rect x="146" y="59" width="1" height="1" fill="#404040"/><rect x="147" y="59" width="1" height="1" fill="#fff"/><rect x="148" y="59" width="1" height="1" fill="#404040"/><rect x="149" y="59" width="3" height="1" fill="#fff"/><rect x="152" y="59" width="1" height="1" fill="#3333A0"/><rect x="153" y="59" width="4" height="1" fill="#fff"/><rect x="157" y="59" width="2" height="1" fill="#3333A0"/><rect x="146" y="60" width="1" height="1" fill="#404040"/><rect x="147" y="60" width="1" height="1" fill="#fff"/><rect x="148" y="60" width="1" height="1" fill="#404040"/><rect x="149" y="60" width="1" height="1" fill="#fff"/><rect x="150" y="60" width="1" height="1" fill="#33DD33"/><rect x="151" y="60" width="1" height="1" fill="#fff"/><rect x="152" y="60" width="1" height="1" fill="#3333A0"/><rect x="153" y="60" width="4" height="1" fill="#fff"/><rect x="157" y="60" width="1" height="1" fill="#3333A0"/><rect x="158" y="60" width="1" height="1" fill="#fff"/><rect x="159" y="60" width="1" height="1" fill="#3333A0"/><rect x="146" y="61" width="1" height="1" fill="#404040"/><rect x="147" y="61" width="1" height="1" fill="#fff"/><rect x="148" y="61" width="1" height="1" fill="#404040"/><rect x="149" y="61" width="1" height="1" fill="#fff"/><rect x="150" y="61" width="2" height="1" fill="#33DD33"/><rect x="152" y="61" width="1" height="1" fill="#3333A0"/><rect x="153" y="61" width="1" height="1" fill="#fff"/><rect x="154" y="61" width="1" height="1" fill="#404040"/><rect x="155" y="61" width="2" height="1" fill="#fff"/><rect x="157" y="61" width="4" height="1" fill="#3333A0"/><rect x="146" y="62" width="1" height="1" fill="#404040"/><rect x="147" y="62" width="1" height="1" fill="#fff"/><rect x="148" y="62" width="1" height="1" fill="#404040"/><rect x="149" y="62" width="3" height="1" fill="#33DD33"/><rect x="152" y="62" width="1" height="1" fill="#3333A0"/><rect x="153" y="62" width="1" height="1" fill="#fff"/><rect x="154" y="62" width="1" height="1" fill="#404040"/><rect x="155" y="62" width="5" height="1" fill="#fff"/><rect x="160" y="62" width="1" height="1" fill="#3333A0"/><rect x="146" y="63" width="1" height="1" fill="#404040"/><rect x="147" y="63" width="1" height="1" fill="#fff"/><rect x="148" y="63" width="4" height="1" fill="#404040"/><rect x="152" y="63" width="1" height="1" fill="#3333A0"/><rect x="153" y="63" width="1" height="1" fill="#fff"/><rect x="154" y="63" width="1" height="1" fill="#404040"/><rect x="155" y="63" width="1" height="1" fill="#fff"/><rect x="156" y="63" width="1" height="1" fill="#33DD33"/><rect x="157" y="63" width="3" height="1" fill="#fff"/><rect x="160" y="63" width="1" height="1" fill="#3333A0"/><rect x="146" y="64" width="1" height="1" fill="#404040"/><rect x="147" y="64" width="5" height="1" fill="#fff"/><rect x="152" y="64" width="1" height="1" fill="#3333A0"/><rect x="153" y="64" width="1" height="1" fill="#fff"/><rect x="154" y="64" width="1" height="1" fill="#404040"/><rect x="155" y="64" width="1" height="1" fill="#fff"/><rect x="156" y="64" width="2" height="1" fill="#33DD33"/><rect x="158" y="64" width="2" height="1" fill="#fff"/><rect x="160" y="64" width="1" height="1" fill="#3333A0"/><rect x="146" y="65" width="6" height="1" fill="#404040"/><rect x="152" y="65" width="1" height="1" fill="#3333A0"/><rect x="153" y="65" width="1" height="1" fill="#fff"/><rect x="154" y="65" width="1" height="1" fill="#404040"/><rect x="155" y="65" width="4" height="1" fill="#33DD33"/><rect x="159" y="65" width="1" height="1" fill="#fff"/><rect x="160" y="65" width="1" height="1" fill="#3333A0"/><rect x="152" y="66" width="1" height="1" fill="#3333A0"/><rect x="153" y="66" width="1" height="1" fill="#fff"/><rect x="154" y="66" width="5" height="1" fill="#404040"/><rect x="159" y="66" width="1" height="1" fill="#fff"/><rect x="160" y="66" width="1" height="1" fill="#3333A0"/><rect x="152" y="67" width="1" height="1" fill="#3333A0"/><rect x="153" y="67" width="7" height="1" fill="#fff"/><rect x="160" y="67" width="1" height="1" fill="#3333A0"/><rect x="152" y="68" width="9" height="1" fill="#3333A0"/>
<rect x="175" y="55" width="5" height="1" fill="#404040"/><rect x="171" y="56" width="5" height="1" fill="#404040"/><rect x="176" y="56" width="3" height="1" fill="#FFFF66"/><rect x="179" y="56" width="4" height="1" fill="#404040"/><rect x="170" y="57" width="1" height="1" fill="#404040"/><rect x="171" y="57" width="3" height="1" fill="#ABAB92"/><rect x="174" y="57" width="1" height="1" fill="#404040"/><rect x="175" y="57" width="2" height="1" fill="#FFFF66"/><rect x="177" y="57" width="1" height="1" fill="#404040"/><rect x="178" y="57" width="2" height="1" fill="#FFFF66"/><rect x="180" y="57" width="1" height="1" fill="#404040"/><rect x="181" y="57" width="2" height="1" fill="#ABAB92"/><rect x="183" y="57" width="1" height="1" fill="#404040"/><rect x="170" y="58" width="1" height="1" fill="#404040"/><rect x="171" y="58" width="2" height="1" fill="#ABAB92"/><rect x="173" y="58" width="1" height="1" fill="#404040"/><rect x="174" y="58" width="7" height="1" fill="#C0C0C0"/><rect x="181" y="58" width="1" height="1" fill="#404040"/><rect x="182" y="58" width="1" height="1" fill="#ABAB92"/><rect x="183" y="58" width="1" height="1" fill="#404040"/><rect x="170" y="59" width="1" height="1" fill="#404040"/><rect x="171" y="59" width="3" height="1" fill="#ABAB92"/><rect x="174" y="59" width="7" height="1" fill="#404040"/><rect x="181" y="59" width="2" height="1" fill="#ABAB92"/><rect x="183" y="59" width="1" height="1" fill="#404040"/><rect x="170" y="60" width="1" height="1" fill="#404040"/><rect x="171" y="60" width="12" height="1" fill="#ABAB92"/><rect x="183" y="60" width="1" height="1" fill="#404040"/><rect x="170" y="61" width="1" height="1" fill="#404040"/><rect x="171" y="61" width="5" height="1" fill="#ABAB92"/><rect x="176" y="61" width="7" height="1" fill="#4040A0"/><rect x="170" y="62" width="1" height="1" fill="#404040"/><rect x="171" y="62" width="5" height="1" fill="#ABAB92"/><rect x="176" y="62" width="1" height="1" fill="#4040A0"/><rect x="177" y="62" width="5" height="1" fill="#fff"/><rect x="182" y="62" width="2" height="1" fill="#4040A0"/><rect x="170" y="63" width="1" height="1" fill="#404040"/><rect x="171" y="63" width="5" height="1" fill="#ABAB92"/><rect x="176" y="63" width="1" height="1" fill="#4040A0"/><rect x="177" y="63" width="5" height="1" fill="#fff"/><rect x="182" y="63" width="1" height="1" fill="#4040A0"/><rect x="183" y="63" width="1" height="1" fill="#fff"/><rect x="184" y="63" width="1" height="1" fill="#4040A0"/><rect x="170" y="64" width="1" height="1" fill="#404040"/><rect x="171" y="64" width="5" height="1" fill="#ABAB92"/><rect x="176" y="64" width="1" height="1" fill="#4040A0"/><rect x="177" y="64" width="1" height="1" fill="#fff"/><rect x="178" y="64" width="3" height="1" fill="#4040A0"/><rect x="181" y="64" width="1" height="1" fill="#fff"/><rect x="182" y="64" width="4" height="1" fill="#4040A0"/><rect x="170" y="65" width="1" height="1" fill="#404040"/><rect x="171" y="65" width="5" height="1" fill="#ABAB92"/><rect x="176" y="65" width="1" height="1" fill="#4040A0"/><rect x="177" y="65" width="8" height="1" fill="#fff"/><rect x="185" y="65" width="1" height="1" fill="#4040A0"/><rect x="170" y="66" width="1" height="1" fill="#404040"/><rect x="171" y="66" width="5" height="1" fill="#ABAB92"/><rect x="176" y="66" width="1" height="1" fill="#4040A0"/><rect x="177" y="66" width="1" height="1" fill="#fff"/><rect x="178" y="66" width="6" height="1" fill="#4040A0"/><rect x="184" y="66" width="1" height="1" fill="#fff"/><rect x="185" y="66" width="1" height="1" fill="#4040A0"/><rect x="171" y="67" width="5" height="1" fill="#404040"/><rect x="176" y="67" width="1" height="1" fill="#4040A0"/><rect x="177" y="67" width="8" height="1" fill="#fff"/><rect x="185" y="67" width="1" height="1" fill="#4040A0"/><rect x="176" y="68" width="10" height="1" fill="#4040A0"/>
<rect x="200" y="57" width="1" height="11" fill="#404040"/><rect x="201" y="57" width="1" height="10" fill="#505050"/><rect x="200" y="67" width="16" height="1" fill="#404040"/><rect x="200" y="68" width="16" height="1" fill="#A0A0A0"/>
<polyline shape-rendering="auto" fill="none" stroke="#D03030" stroke-width="1.1" points="202,65.5 203.5,65.5 204.5,64 205.5,60 206.5,58 207.5,60 208.5,64 209.5,65.5 210.5,65.5 211.5,63.5 212.3,62.5 213.2,63.5 214.2,65.5 216,65.5"/>
<g shape-rendering="auto"><path d="M224.5 67 L224.5 62 L225.3 60.5 L225.3 58.5 L226.3 57.3 L227.3 57.3 L228.3 58.5 L228.3 60.5 L229.2 62 L229.2 67Z" fill="#44EE44" stroke="#404040" stroke-width="0.9"/><path d="M230 67 L230 62.5 L231 60 L231.5 57.5 L232.5 55.5 L233.5 57 L235 60 L236.5 62.5 L238 65 L239.5 67Z" fill="#44CCCC" stroke="#404040" stroke-width="0.9"/></g>
<rect x="229" y="63" width="1" height="4" fill="#E04040"/><rect x="223" y="67" width="17" height="1" fill="#E04040"/>
<rect x="248" y="57" width="1" height="11" fill="#404040"/><rect x="249" y="57" width="1" height="10" fill="#505050"/><rect x="248" y="67" width="16" height="1" fill="#404040"/><rect x="248" y="68" width="16" height="1" fill="#A0A0A0"/>
<rect x="251" y="63" width="1" height="4" fill="#D83838"/>
<rect x="253" y="59" width="1" height="8" fill="#D83838"/>
<rect x="255" y="64" width="1" height="3" fill="#D83838"/>
<rect x="258" y="65" width="1" height="2" fill="#D83838"/>
<rect x="260" y="64" width="1" height="3" fill="#D83838"/>
<text x="0" y="0" transform="translate(257.6,62.6) scale(0.9,1)" font-family="Liberation Sans, sans-serif" font-size="10.5" fill="#303030" shape-rendering="auto">Σ</text>
<g shape-rendering="auto"><defs><radialGradient id="gb" cx="35%" cy="30%" r="75%"><stop offset="0" stop-color="#6CA4FA"/><stop offset="0.6" stop-color="#4680E4"/><stop offset="1" stop-color="#3562C8"/></radialGradient></defs><circle cx="286" cy="62" r="7.5" fill="url(#gb)"/><path d="M279 61.5 L279.3 59 L280.5 57 L283 55.3 L286 54.6 L288 55 L286 56.5 L284.8 58 L283.8 59.6 L281.5 59.6 L280.3 61.5Z" fill="#40D040"/><path d="M288.3 56.8 L290 56 L292 57.8 L293.2 60.8 L291.5 60.8 L290.2 59.2 L288.6 58.6Z" fill="#40D040"/><path d="M283.3 62.2 L285 61 L286.5 59.8 L288.2 60 L290.2 62 L290.2 64 L288.2 65.6 L287.2 67.6 L285.6 69.3 L285 66 L283.2 64.6Z" fill="#40D040"/><circle cx="286" cy="62" r="7.5" fill="none" stroke="#2C2C3C" stroke-width="1"/></g>
<rect x="331" y="54" width="10" height="7" fill="#3D9D98"/><rect x="332" y="57" width="8" height="3" fill="#fff"/><rect x="332" y="55" width="1" height="1" fill="#fff"/>
<rect x="326" y="58" width="10" height="7" fill="#3D9D98"/><rect x="327" y="61" width="8" height="3" fill="#fff"/><rect x="327" y="59" width="1" height="1" fill="#fff"/>
<rect x="332" y="62" width="10" height="7" fill="#4040A0"/><rect x="333" y="65" width="8" height="3" fill="#fff"/><rect x="333" y="63" width="1" height="1" fill="#fff"/>
<rect x="362" y="55" width="1" height="1" fill="#404040"/><rect x="354" y="56" width="6" height="1" fill="#404040"/><rect x="362" y="56" width="2" height="1" fill="#404040"/><rect x="354" y="57" width="1" height="1" fill="#404040"/><rect x="355" y="57" width="1" height="1" fill="#00E0E0"/><rect x="356" y="57" width="1" height="1" fill="#fff"/><rect x="357" y="57" width="1" height="1" fill="#00E0E0"/><rect x="358" y="57" width="1" height="1" fill="#fff"/><rect x="359" y="57" width="6" height="1" fill="#404040"/><rect x="354" y="58" width="1" height="1" fill="#404040"/><rect x="355" y="58" width="1" height="1" fill="#fff"/><rect x="356" y="58" width="1" height="1" fill="#00E0E0"/><rect x="357" y="58" width="1" height="1" fill="#fff"/><rect x="358" y="58" width="1" height="1" fill="#00E0E0"/><rect x="359" y="58" width="1" height="1" fill="#404040"/><rect x="362" y="58" width="2" height="1" fill="#404040"/><rect x="350" y="59" width="10" height="1" fill="#404040"/><rect x="362" y="59" width="1" height="1" fill="#404040"/><rect x="350" y="60" width="1" height="1" fill="#404040"/><rect x="351" y="60" width="4" height="1" fill="#fff"/><rect x="355" y="60" width="1" height="1" fill="#404040"/><rect x="350" y="61" width="1" height="1" fill="#404040"/><rect x="351" y="61" width="4" height="1" fill="#fff"/><rect x="355" y="61" width="1" height="1" fill="#404040"/><rect x="357" y="61" width="3" height="1" fill="#404040"/><rect x="350" y="62" width="6" height="1" fill="#404040"/><rect x="357" y="62" width="2" height="1" fill="#404040"/><rect x="350" y="63" width="1" height="1" fill="#404040"/><rect x="351" y="63" width="4" height="1" fill="#fff"/><rect x="355" y="63" width="1" height="1" fill="#404040"/><rect x="357" y="63" width="1" height="1" fill="#404040"/><rect x="359" y="63" width="1" height="1" fill="#404040"/><rect x="361" y="63" width="6" height="1" fill="#404040"/><rect x="350" y="64" width="1" height="1" fill="#404040"/><rect x="351" y="64" width="4" height="1" fill="#fff"/><rect x="355" y="64" width="1" height="1" fill="#404040"/><rect x="360" y="64" width="2" height="1" fill="#404040"/><rect x="362" y="64" width="4" height="1" fill="#F0F040"/><rect x="366" y="64" width="1" height="1" fill="#404040"/><rect x="350" y="65" width="6" height="1" fill="#404040"/><rect x="361" y="65" width="1" height="1" fill="#404040"/><rect x="362" y="65" width="4" height="1" fill="#F0F040"/><rect x="366" y="65" width="1" height="1" fill="#404040"/><rect x="350" y="66" width="1" height="1" fill="#404040"/><rect x="351" y="66" width="4" height="1" fill="#fff"/><rect x="355" y="66" width="1" height="1" fill="#404040"/><rect x="361" y="66" width="6" height="1" fill="#404040"/><rect x="350" y="67" width="1" height="1" fill="#404040"/><rect x="351" y="67" width="4" height="1" fill="#fff"/><rect x="355" y="67" width="1" height="1" fill="#404040"/><rect x="350" y="68" width="6" height="1" fill="#404040"/>
<g shape-rendering="auto"><circle cx="381.5" cy="62.5" r="6" fill="#fff" stroke="#383838" stroke-width="1.2"/><circle cx="376.5" cy="57.3" r="1.3" fill="#fff" stroke="#383838" stroke-width="1"/><circle cx="386.5" cy="57.3" r="1.3" fill="#fff" stroke="#383838" stroke-width="1"/><path d="M381.5 62.5 L385.3 58.7" stroke="#303030" stroke-width="1" stroke-dasharray="1.2 0.5"/></g>
<rect x="379" y="54" width="5" height="1" fill="#383838"/><rect x="381" y="55" width="1" height="2" fill="#383838"/>
<rect x="381" y="58" width="1" height="1" fill="#4848C0"/>
<rect x="385" y="62" width="1" height="1" fill="#4848C0"/>
<rect x="381" y="66" width="1" height="1" fill="#4848C0"/>
<rect x="377" y="62" width="1" height="1" fill="#4848C0"/>
<rect x="381" y="62" width="1" height="1" fill="#303030"/>
<g shape-rendering="auto"><circle cx="408.5" cy="60.4" r="5" fill="#F4F3EC" stroke="#404040" stroke-width="1.1"/><path d="M412.2 64.2 L416.4 68.4" stroke="#404040" stroke-width="2.2"/></g>
<g shape-rendering="auto"><circle cx="432.5" cy="60.4" r="5" fill="#F4F3EC" stroke="#404040" stroke-width="1.1"/><path d="M436.2 64.2 L440.4 68.4" stroke="#404040" stroke-width="2.2"/></g>
<g shape-rendering="auto"><circle cx="456.5" cy="60.4" r="5" fill="#F4F3EC" stroke="#404040" stroke-width="1.1"/><path d="M460.2 64.2 L464.4 68.4" stroke="#404040" stroke-width="2.2"/></g>
<rect x="415" y="58" width="5" height="1" fill="#404040"/><rect x="417" y="56" width="1" height="5" fill="#404040"/>
<rect x="439" y="58" width="5" height="1" fill="#404040"/>
<path shape-rendering="auto" d="M463.3 55.5 L467.7 60.5 M467.7 55.5 L463.3 60.5" stroke="#EE3344" stroke-width="1.3"/>
<g shape-rendering="auto"><path d="M508.5 62.5 L513.5 57.3 L513.5 60.5 L517.5 60.5 L517.5 64.5 L513.5 64.5 L513.5 67.7Z" fill="#5FB3B3" stroke="#484848" stroke-width="0.9"/><path d="M543.5 62.5 L538.5 57.3 L538.5 60.5 L534.5 60.5 L534.5 64.5 L538.5 64.5 L538.5 67.7Z" fill="#5FB3B3" stroke="#484848" stroke-width="0.9"/></g>
<g shape-rendering="auto" fill="#404040"><path d="M555 56 L560 56 L555 61Z"/><path d="M568 56 L568 61 L563 56Z"/><path d="M555 69 L555 64 L560 69Z"/><path d="M568 69 L563 69 L568 64Z"/><path d="M556 57 L567 68 M567 57 L556 68" stroke="#404040" stroke-width="1" fill="none"/></g>
</svg>
<div class="abs" id="icoA" style="left:301px;top:53px;width:16px;text-align:center;font-family:'Liberation Serif',serif;font-size:16px;line-height:20px;color:#3333AA;transform:scaleX(1.25);">A</div>
<div class="abs" id="icoTIC" style="left:482px;top:58px;font-family:'Liberation Mono',monospace;font-size:10px;line-height:12px;color:#303030;letter-spacing:-0.8px;">TIC</div>
<div class="tb" style="left:697px"><div style="position:absolute;left:2px;top:10px;width:7px;height:3px;background:#fff"></div></div>
<div class="tb" style="left:716px"><div style="position:absolute;left:2px;top:2px;width:9px;height:7px;border:1px solid #fff;border-top-width:3px"></div></div>
<div class="tb tbc" style="left:735px"><svg width="15" height="15" style="position:absolute;left:0;top:0"><path d="M3.3 3.3 L11.7 11.7 M11.7 3.3 L3.3 11.7" stroke="#fff" stroke-width="1.9"/></svg></div>
<div class="mb" style="left:698px"><div style="position:absolute;left:4px;top:10px;width:6px;height:2px;background:#4D4D40"></div></div>
<div class="mb" style="left:717px"><div style="position:absolute;left:6px;top:3px;width:4px;height:3px;border:1px solid #4D4D40;border-top-width:2px;"></div><div style="position:absolute;left:3px;top:6px;width:5px;height:3px;border:1px solid #4D4D40;border-top-width:2px;background:#F1EFE4"></div></div>
<div class="mb" style="left:736px"><svg width="16" height="16" style="position:absolute;left:0;top:0"><path d="M4.6 4.6 L11.8 11.8 M11.8 4.6 L4.6 11.8" stroke="#4D4D40" stroke-width="2.1"/></svg></div>

<div id="mdi-t"></div><div id="mdi-l"></div><div id="mdi-t2"></div><div id="mdi-l2"></div>
<div id="h1">Diversity sample test mix</div>
<div id="h2">Div43 Sm (Mn, 2x3)</div>
<div id="tr"><span style="margin-right:3px">1: Scan ES+</span><br>TIC<br>3.05e5<br>Area</div>
<svg id="chart" width="758" height="513" viewBox="0 0 758 513" shape-rendering="crispEdges" style="position:absolute;left:0;top:0">
<polygon points="46.5,375.5 50.0,369.0 55.0,360.0 60.0,350.0 64.0,341.0 66.0,338.0 67.5,337.5 69.0,339.0 71.0,343.0 74.5,350.0 78.0,357.0 82.0,366.0 85.5,373.0 88.5,377.5 92.0,380.0 92.0,380.6 46.5,376.0" fill="#000080"/>
<polygon points="109.0,381.6 122.0,381.4 123.0,380.5 128.0,380.4 129.0,379.5 132.5,379.5 133.5,380.4 148.0,380.5 149.5,381.5 151.0,382.4 151.0,382.5 109.0,382.5" fill="#008080"/>
<polygon points="159.0,381.2 160.0,380.7 163.9,378.3 167.8,372.9 171.7,368.2 174.8,363.5 177.2,358.0 179.5,351.8 182.6,344.8 185.7,338.5 189.6,331.5 193.5,325.3 196.7,321.8 201.3,319.0 205.2,315.1 209.9,311.6 211.2,311.4 222.5,311.4 223.7,313.1 229.5,318.9 235.3,323.9 241.1,328.3 245.5,330.5 252.0,330.9 257.8,330.7 257.8,386.2 159.0,382.8" fill="#808080"/>
<polygon points="257.8,330.7 261.0,329.8 264.3,328.3 270.2,323.9 276.0,320.3 280.3,318.9 283.2,319.6 286.9,321.4 290.5,323.2 296.3,326.9 300.0,329.2 302.1,330.2 304.2,330.4 304.2,387.8 257.8,386.2" fill="#FF8000"/>
<polygon points="304.2,330.4 306.0,329.8 309.7,327.7 315.6,322.8 319.5,317.0 323.4,308.2 327.3,298.5 332.2,286.8 337.0,275.1 340.0,265.3 341.9,255.6 342.8,249.0 344.7,236.0 348.4,215.2 352.5,198.1 355.7,173.7 358.6,154.2 360.6,139.6 361.4,133.4 362.2,133.4 362.8,136.0 364.2,144.5 366.7,159.1 369.6,178.6 372.0,198.1 374.0,210.3 375.9,227.3 378.4,246.8 379.2,260.0 380.6,279.2 385.0,308.5 388.5,327.0 392.3,343.6 396.0,355.0 399.6,364.0 403.0,370.0 407.0,374.3 412.0,378.5 418.7,382.5 424.0,385.0 430.4,387.4 435.0,388.8 438.5,389.6 438.5,392.5 304.2,387.8" fill="#FF0000"/>
<polygon points="438.5,389.6 441.0,389.0 443.7,387.7 447.0,384.0 450.9,379.4 455.0,374.0 459.2,368.7 462.0,366.0 463.6,364.4 471.5,364.4 473.5,366.8 478.2,372.6 484.9,380.4 488.0,383.3 490.6,385.4 495.0,386.5 500.7,386.5 500.7,394.7 438.5,392.5" fill="#000080"/>
<polygon points="500.7,386.5 503.5,385.0 507.4,382.2 510.5,380.6 514.1,379.4 521.8,379.4 524.5,381.0 528.7,383.8 532.8,387.2 537.6,390.8 537.6,396.1 500.7,394.7" fill="#008080"/>
<polygon points="537.6,390.8 540.5,390.0 543.5,388.9 548.0,387.0 553.0,385.3 557.0,384.0 560.1,383.4 564.9,384.1 568.0,386.0 572.0,388.9 575.5,391.5 579.1,394.1 582.5,396.0 586.2,397.2 591.1,397.2 591.5,397.0 591.5,398.0 537.6,396.1" fill="#808080"/>
<polygon points="591.5,397.0 594.0,396.0 598.5,392.2 604.0,385.7 609.6,379.2 615.1,373.7 620.6,370.4 628.0,370.0 635.4,367.6 641.0,367.2 648.3,369.1 653.9,371.9 661.3,376.5 668.7,379.8 673.3,381.1 673.3,381.6 591.5,397.8" fill="#FF8000"/>
<line x1="46.5" y1="376.0" x2="93.0" y2="380.7" stroke="#000" stroke-width="1"/>
<line x1="109.0" y1="382.5" x2="151.0" y2="382.5" stroke="#000" stroke-width="1"/>
<line x1="157.0" y1="382.7" x2="438.5" y2="392.5" stroke="#000" stroke-width="1"/>
<line x1="438.5" y1="392.5" x2="591.5" y2="398.0" stroke="#000" stroke-width="1"/>
<line x1="591.5" y1="397.8" x2="673.3" y2="381.6" stroke="#000" stroke-width="1"/>
<line x1="257.8" y1="330.7" x2="257.8" y2="386.2" stroke="#000" stroke-width="1"/>
<line x1="304.2" y1="330.4" x2="304.2" y2="387.8" stroke="#000" stroke-width="1"/>
<line x1="500.7" y1="386.5" x2="500.7" y2="394.7" stroke="#000" stroke-width="1"/>
<line x1="537.6" y1="390.8" x2="537.6" y2="396.1" stroke="#000" stroke-width="1"/>
<rect x="690" y="380" width="4" height="1" fill="#000"/><rect x="688" y="380" width="2" height="1" fill="#FF0000"/><rect x="693" y="379" width="3" height="1" fill="#FF0000"/>
<polyline fill="none" stroke="#008000" stroke-width="1" points="43.0,381.0 46.5,375.5 50.0,369.0 55.0,360.0 60.0,350.0 64.0,341.0 66.0,338.0 67.5,337.5 69.0,339.0 71.0,343.0 74.5,350.0 78.0,357.0 82.0,366.0 85.5,373.0 88.5,377.5 92.0,380.0 97.0,381.0 103.0,382.0 109.0,381.6 122.0,381.4 123.0,380.5 128.0,380.4 129.0,379.5 132.5,379.5 133.5,380.4 148.0,380.5 149.5,381.5 151.0,382.4 157.0,382.4 158.5,381.5 160.0,380.7 163.9,378.3 167.8,372.9 171.7,368.2 174.8,363.5 177.2,358.0 179.5,351.8 182.6,344.8 185.7,338.5 189.6,331.5 193.5,325.3 196.7,321.8 201.3,319.0 205.2,315.1 209.9,311.6 211.2,311.4 222.5,311.4 223.7,313.1 229.5,318.9 235.3,323.9 241.1,328.3 245.5,330.5 252.0,330.9 257.8,330.7 261.0,329.8 264.3,328.3 270.2,323.9 276.0,320.3 280.3,318.9 283.2,319.6 286.9,321.4 290.5,323.2 296.3,326.9 300.0,329.2 302.1,330.2 304.2,330.4 306.0,329.8 309.7,327.7 315.6,322.8 319.5,317.0 323.4,308.2 327.3,298.5 332.2,286.8 337.0,275.1 340.0,265.3 341.9,255.6 342.8,249.0 344.7,236.0 348.4,215.2 352.5,198.1 355.7,173.7 358.6,154.2 360.6,139.6 361.4,133.4 362.2,133.4 362.8,136.0 364.2,144.5 366.7,159.1 369.6,178.6 372.0,198.1 374.0,210.3 375.9,227.3 378.4,246.8 379.2,260.0 380.6,279.2 385.0,308.5 388.5,327.0 392.3,343.6 396.0,355.0 399.6,364.0 403.0,370.0 407.0,374.3 412.0,378.5 418.7,382.5 424.0,385.0 430.4,387.4 435.0,388.8 438.5,389.6 441.0,389.0 443.7,387.7 447.0,384.0 450.9,379.4 455.0,374.0 459.2,368.7 462.0,366.0 463.6,364.4 471.5,364.4 473.5,366.8 478.2,372.6 484.9,380.4 488.0,383.3 490.6,385.4 495.0,386.5 500.7,386.5 503.5,385.0 507.4,382.2 510.5,380.6 514.1,379.4 521.8,379.4 524.5,381.0 528.7,383.8 532.8,387.2 537.6,390.8 540.5,390.0 543.5,388.9 548.0,387.0 553.0,385.3 557.0,384.0 560.1,383.4 564.9,384.1 568.0,386.0 572.0,388.9 575.5,391.5 579.1,394.1 582.5,396.0 586.2,397.2 591.1,397.2 594.0,396.0 598.5,392.2 604.0,385.7 609.6,379.2 615.1,373.7 620.6,370.4 628.0,370.0 635.4,367.6 641.0,367.2 648.3,369.1 653.9,371.9 661.3,376.5 668.7,379.8 673.3,381.1 687.1,381.1 690.8,379.3 696.4,378.3 707.4,377.2"/>
<rect x="41" y="133" width="2" height="335" fill="#000"/>
<rect x="41" y="466" width="668" height="2" fill="#000"/>
<rect x="36" y="465" width="5" height="1" fill="#000"/>
<rect x="38" y="432" width="3" height="1" fill="#000"/>
<rect x="38" y="399" width="3" height="1" fill="#000"/>
<rect x="38" y="365" width="3" height="1" fill="#000"/>
<rect x="38" y="332" width="3" height="1" fill="#000"/>
<rect x="36" y="299" width="5" height="1" fill="#000"/>
<rect x="38" y="266" width="3" height="1" fill="#000"/>
<rect x="38" y="233" width="3" height="1" fill="#000"/>
<rect x="38" y="199" width="3" height="1" fill="#000"/>
<rect x="38" y="166" width="3" height="1" fill="#000"/>
<rect x="36" y="133" width="5" height="1" fill="#000"/>
<rect x="47" y="468" width="1" height="3" fill="#000"/>
<rect x="54" y="468" width="1" height="3" fill="#000"/>
<rect x="62" y="468" width="1" height="3" fill="#000"/>
<rect x="69" y="468" width="1" height="3" fill="#000"/>
<rect x="77" y="468" width="1" height="6" fill="#000"/>
<rect x="84" y="468" width="1" height="3" fill="#000"/>
<rect x="92" y="468" width="1" height="3" fill="#000"/>
<rect x="99" y="468" width="1" height="3" fill="#000"/>
<rect x="107" y="468" width="1" height="3" fill="#000"/>
<rect x="114" y="468" width="1" height="6" fill="#000"/>
<rect x="122" y="468" width="1" height="3" fill="#000"/>
<rect x="129" y="468" width="1" height="3" fill="#000"/>
<rect x="136" y="468" width="1" height="3" fill="#000"/>
<rect x="144" y="468" width="1" height="3" fill="#000"/>
<rect x="151" y="468" width="1" height="6" fill="#000"/>
<rect x="159" y="468" width="1" height="3" fill="#000"/>
<rect x="166" y="468" width="1" height="3" fill="#000"/>
<rect x="174" y="468" width="1" height="3" fill="#000"/>
<rect x="181" y="468" width="1" height="3" fill="#000"/>
<rect x="189" y="468" width="1" height="6" fill="#000"/>
<rect x="196" y="468" width="1" height="3" fill="#000"/>
<rect x="204" y="468" width="1" height="3" fill="#000"/>
<rect x="211" y="468" width="1" height="3" fill="#000"/>
<rect x="218" y="468" width="1" height="3" fill="#000"/>
<rect x="226" y="468" width="1" height="6" fill="#000"/>
<rect x="233" y="468" width="1" height="3" fill="#000"/>
<rect x="241" y="468" width="1" height="3" fill="#000"/>
<rect x="248" y="468" width="1" height="3" fill="#000"/>
<rect x="256" y="468" width="1" height="3" fill="#000"/>
<rect x="263" y="468" width="1" height="6" fill="#000"/>
<rect x="271" y="468" width="1" height="3" fill="#000"/>
<rect x="278" y="468" width="1" height="3" fill="#000"/>
<rect x="286" y="468" width="1" height="3" fill="#000"/>
<rect x="293" y="468" width="1" height="3" fill="#000"/>
<rect x="301" y="468" width="1" height="6" fill="#000"/>
<rect x="308" y="468" width="1" height="3" fill="#000"/>
<rect x="315" y="468" width="1" height="3" fill="#000"/>
<rect x="323" y="468" width="1" height="3" fill="#000"/>
<rect x="330" y="468" width="1" height="3" fill="#000"/>
<rect x="338" y="468" width="1" height="6" fill="#000"/>
<rect x="345" y="468" width="1" height="3" fill="#000"/>
<rect x="353" y="468" width="1" height="3" fill="#000"/>
<rect x="360" y="468" width="1" height="3" fill="#000"/>
<rect x="368" y="468" width="1" height="3" fill="#000"/>
<rect x="375" y="468" width="1" height="6" fill="#000"/>
<rect x="383" y="468" width="1" height="3" fill="#000"/>
<rect x="390" y="468" width="1" height="3" fill="#000"/>
<rect x="397" y="468" width="1" height="3" fill="#000"/>
<rect x="405" y="468" width="1" height="3" fill="#000"/>
<rect x="412" y="468" width="1" height="6" fill="#000"/>
<rect x="420" y="468" width="1" height="3" fill="#000"/>
<rect x="427" y="468" width="1" height="3" fill="#000"/>
<rect x="435" y="468" width="1" height="3" fill="#000"/>
<rect x="442" y="468" width="1" height="3" fill="#000"/>
<rect x="450" y="468" width="1" height="6" fill="#000"/>
<rect x="457" y="468" width="1" height="3" fill="#000"/>
<rect x="465" y="468" width="1" height="3" fill="#000"/>
<rect x="472" y="468" width="1" height="3" fill="#000"/>
<rect x="479" y="468" width="1" height="3" fill="#000"/>
<rect x="487" y="468" width="1" height="6" fill="#000"/>
<rect x="494" y="468" width="1" height="3" fill="#000"/>
<rect x="502" y="468" width="1" height="3" fill="#000"/>
<rect x="509" y="468" width="1" height="3" fill="#000"/>
<rect x="517" y="468" width="1" height="3" fill="#000"/>
<rect x="524" y="468" width="1" height="6" fill="#000"/>
<rect x="532" y="468" width="1" height="3" fill="#000"/>
<rect x="539" y="468" width="1" height="3" fill="#000"/>
<rect x="547" y="468" width="1" height="3" fill="#000"/>
<rect x="554" y="468" width="1" height="3" fill="#000"/>
<rect x="562" y="468" width="1" height="6" fill="#000"/>
<rect x="569" y="468" width="1" height="3" fill="#000"/>
<rect x="576" y="468" width="1" height="3" fill="#000"/>
<rect x="584" y="468" width="1" height="3" fill="#000"/>
<rect x="591" y="468" width="1" height="3" fill="#000"/>
<rect x="599" y="468" width="1" height="6" fill="#000"/>
<rect x="606" y="468" width="1" height="3" fill="#000"/>
<rect x="614" y="468" width="1" height="3" fill="#000"/>
<rect x="621" y="468" width="1" height="3" fill="#000"/>
<rect x="629" y="468" width="1" height="3" fill="#000"/>
<rect x="636" y="468" width="1" height="6" fill="#000"/>
<rect x="644" y="468" width="1" height="3" fill="#000"/>
<rect x="651" y="468" width="1" height="3" fill="#000"/>
<rect x="658" y="468" width="1" height="3" fill="#000"/>
<rect x="666" y="468" width="1" height="3" fill="#000"/>
<rect x="673" y="468" width="1" height="6" fill="#000"/>
<rect x="681" y="468" width="1" height="3" fill="#000"/>
<rect x="688" y="468" width="1" height="3" fill="#000"/>
<rect x="696" y="468" width="1" height="3" fill="#000"/>
<rect x="703" y="468" width="1" height="3" fill="#000"/>
<rect x="353" y="131" width="8" height="1" fill="#000"/>
</svg>
<div class="pk" style="left:25.3px;top:305px">0.34<br>11306</div>
<div class="pk" style="left:90.0px;top:347px">1.21<br>743</div>
<div class="pk" style="left:174.0px;top:279px">2.34<br>61670</div>
<div class="pk" style="left:242.0px;top:287px">3.25<br>35233</div>
<div class="pk" style="left:290.0px;top:117px">4.30<br>151598</div>
<div class="pk" style="left:426.0px;top:332px">5.71<br>12509</div>
<div class="pk" style="left:473.8px;top:347px">6.38<br>5341</div>
<div class="pk" style="left:518.3px;top:351px">6.96<br>4980</div>
<div class="pk" style="left:600.2px;top:335px">8.05<br>13152</div>
<div class="pk" style="left:651.8px;top:346px">8.75<br>50</div>
<div class="xl" style="left:84px">1.00</div>
<div class="xl" style="left:159px">2.00</div>
<div class="xl" style="left:233px">3.00</div>
<div class="xl" style="left:308px">4.00</div>
<div class="xl" style="left:383px">5.00</div>
<div class="xl" style="left:457px">6.00</div>
<div class="xl" style="left:532px">7.00</div>
<div class="xl" style="left:606px">8.00</div>
<div class="yl" style="left:6.6px;top:126px;letter-spacing:0.6px">100</div>
<div class="yl" style="left:5px;top:459px">0</div>
<div class="abs" style="left:23px;top:291px;width:16px;height:16px;font-size:12.5px;line-height:16px;text-align:center;transform:rotate(-90deg) scaleY(1.12);">%</div>
<div class="abs" style="left:715px;top:460px;font-size:14px;line-height:16px;">Time</div>
<div id="sb-top"></div>
<div class="sbp" style="left:620px;width:62px"></div>
<div class="sbp" style="left:686px;width:62px"></div>
</div>
</body></html>
